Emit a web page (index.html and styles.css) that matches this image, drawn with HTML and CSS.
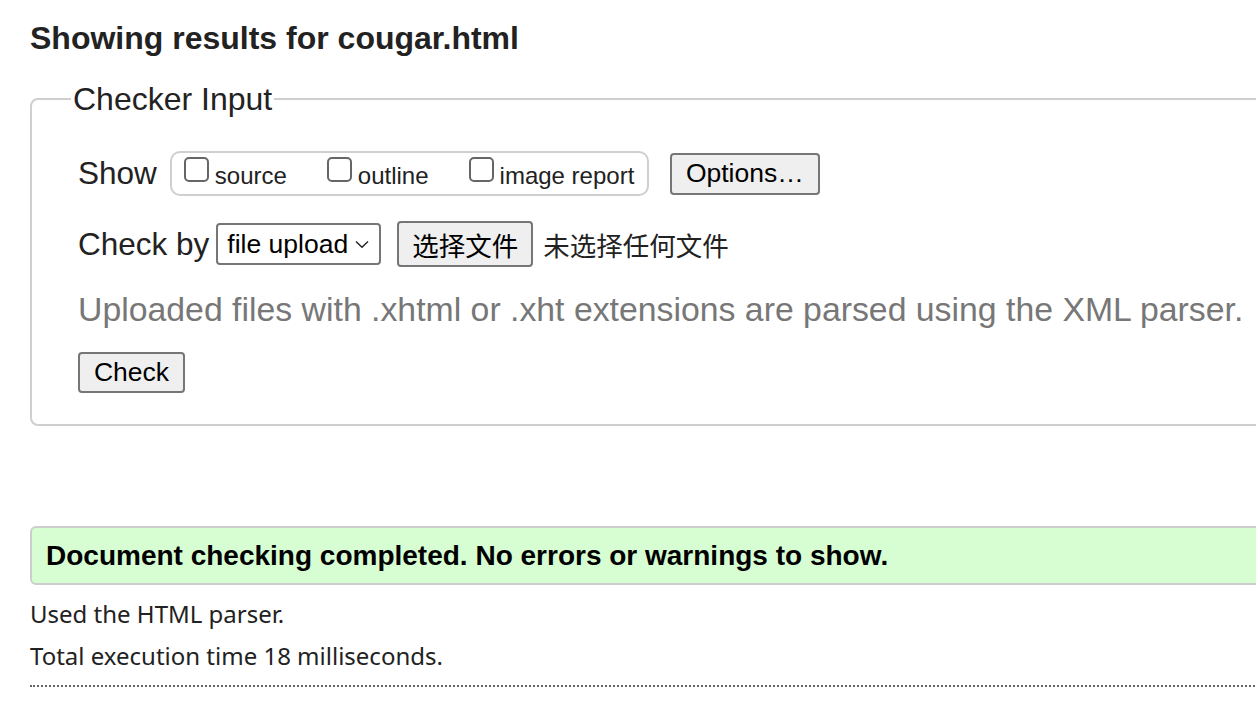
FILE: index.html
```html
<!DOCTYPE html>
<html lang="en">
<head>
<meta charset="utf-8">
<title>Showing results for cougar.html</title>
<link rel="stylesheet" href="styles.css">
</head>
<body>
<div class="page">
  <h1 class="title">Showing results for cougar.html</h1>
  <form class="checker">
    <fieldset class="input-set">
      <legend class="legend">Checker Input</legend>
      <div class="row row-show">
        <span class="row-label">Show</span>
        <span class="check-group">
          <label class="check"><span class="box"></span><span class="check-text">source</span></label>
          <label class="check"><span class="box"></span><span class="check-text">outline</span></label>
          <label class="check"><span class="box"></span><span class="check-text">image report</span></label>
        </span>
        <span class="btn btn-options">Options…</span>
      </div>
      <div class="row row-by">
        <span class="row-label">Check by</span>
        <span class="select">file upload<svg class="chev" width="14" height="9" viewBox="0 0 14 9"><path d="M1 1.5 L7 7.2 L13 1.5" fill="none" stroke="#222" stroke-width="1.4"/></svg></span>
        <span class="btn btn-file">选择文件</span>
        <span class="file-name">未选择任何文件</span>
      </div>
      <p class="hint">Uploaded files with .xhtml or .xht extensions are parsed using the XML parser.</p>
      <div class="row row-submit">
        <span class="btn btn-check">Check</span>
      </div>
    </fieldset>
  </form>
  <p class="success">Document checking completed. No errors or warnings to show.</p>
  <p class="meta">Used the HTML parser.</p>
  <p class="meta">Total execution time 18 milliseconds.</p>
  <hr class="rule">
</div>
</body>
</html>
```
FILE: styles.css
```css
html, body {
  margin: 0;
  padding: 0;
  overflow: hidden;
  background: #fff;
}
body {
  font-family: "Liberation Sans", Arial, sans-serif;
  color: #222;
}
.page {
  width: 1300px;
  padding: 0 0 0 30px;
}
.title {
  font-size: 32px;
  font-weight: bold;
  line-height: 36px;
  margin: 20px 0 0 0;
  color: #222;
}
.checker {
  margin: 0;
}
.input-set {
  margin: 26px 0 0 0;
  border: 2px solid #cfcfcf;
  border-radius: 8px;
  padding: 35px 0 31px 46px;
  min-width: 0;
}
.legend {
  font-size: 32px;
  line-height: 34px;
  padding: 0 2px;
  margin-left: -7px;
  color: #222;
}
.row {
  display: flex;
  align-items: center;
}
.row-label {
  font-size: 31.5px;
  color: #222;
}
.row-show .row-label {
  margin-right: 13px;
}
.check-group {
  display: inline-flex;
  align-items: center;
  box-sizing: border-box;
  width: 479px;
  height: 45px;
  border: 2px solid #cfcfcf;
  border-radius: 10px;
  padding: 0 0 0 12px;
}
.check {
  display: inline-flex;
  align-items: center;
}
.check + .check {
  margin-left: 40px;
}
.box {
  box-sizing: border-box;
  width: 25px;
  height: 25px;
  border: 2px solid #666;
  border-radius: 5px;
  margin-right: 6px;
  margin-top: -9px;
}
.check-text {
  font-size: 24px;
  color: #222;
  margin-top: 4px;
}
.btn {
  display: inline-flex;
  align-items: center;
  justify-content: center;
  box-sizing: border-box;
  background: #efefef;
  border: 2px solid #767676;
  border-radius: 4px;
  color: #000;
  font-size: 26.5px;
}
.btn-options {
  margin-left: 21px;
  width: 150px;
  height: 42px;
}
.row-by {
  margin-top: 25px;
}
.row-by .row-label {
  margin-right: 7px;
}
.select {
  display: inline-flex;
  align-items: center;
  justify-content: space-between;
  box-sizing: border-box;
  width: 165px;
  height: 42px;
  padding: 0 10px 0 9px;
  border: 2px solid #767676;
  border-radius: 4px;
  font-size: 26.5px;
  color: #000;
}
.btn-file {
  margin-left: 16px;
  width: 136px;
  height: 46px;
  font-family: "Noto Sans CJK SC", sans-serif;
  font-size: 26.5px;
}
.file-name {
  margin-left: 10px;
  font-family: "Noto Sans CJK SC", sans-serif;
  font-size: 26.5px;
  color: #222;
}
.hint {
  margin: 22px 0 0 0;
  font-size: 33.8px;
  line-height: 40px;
  color: #777;
  white-space: nowrap;
}
.row-submit {
  margin-top: 23px;
}
.btn-check {
  width: 107px;
  height: 41px;
}
.success {
  margin: 100px 0 0 0;
  height: 55px;
  box-sizing: content-box;
  display: flex;
  align-items: center;
  padding: 0 0 0 14px;
  background: #d7fdd2;
  border: 2px solid #cdcdcd;
  border-radius: 6px;
  font-size: 28px;
  font-weight: bold;
  color: #000;
}
.meta {
  margin: 15px 0 0 0;
  font-family: "Noto Sans", sans-serif;
  font-size: 24px;
  line-height: 28px;
  color: #222;
}
.meta + .meta {
  margin-top: 14px;
}
.rule {
  margin: 15px 0 0 0;
  border: 0;
  border-top: 2px dotted #666;
  height: 0;
}
```
